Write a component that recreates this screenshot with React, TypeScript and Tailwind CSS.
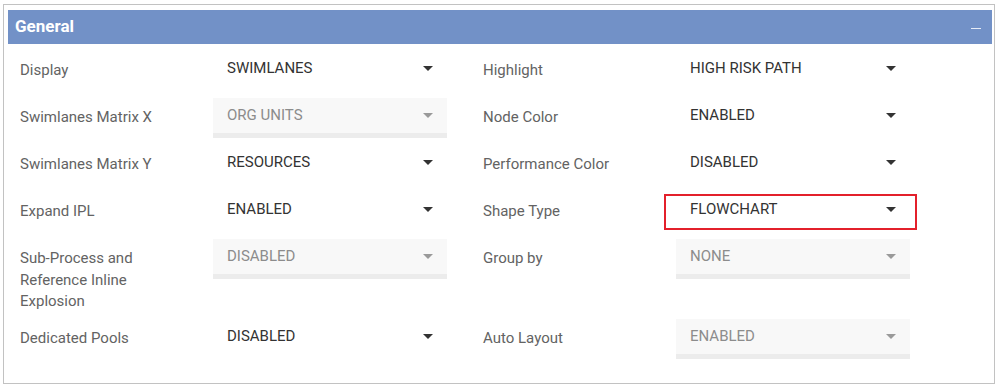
import React from "react";

type Field = { label: string; value: string; disabled?: boolean; marked?: boolean };

const rows: [Field, Field][] = [
  [
    { label: "Display", value: "SWIMLANES" },
    { label: "Highlight", value: "HIGH RISK PATH" },
  ],
  [
    { label: "Swimlanes Matrix X", value: "ORG UNITS", disabled: true },
    { label: "Node Color", value: "ENABLED" },
  ],
  [
    { label: "Swimlanes Matrix Y", value: "RESOURCES" },
    { label: "Performance Color", value: "DISABLED" },
  ],
  [
    { label: "Expand IPL", value: "ENABLED" },
    { label: "Shape Type", value: "FLOWCHART", marked: true },
  ],
  [
    { label: "Sub-Process and Reference Inline Explosion", value: "DISABLED", disabled: true },
    { label: "Group by", value: "NONE", disabled: true },
  ],
  [
    { label: "Dedicated Pools", value: "DISABLED" },
    { label: "Auto Layout", value: "ENABLED", disabled: true },
  ],
];

function Caret({ disabled }: { disabled?: boolean }) {
  return (
    <svg width="10" height="5" viewBox="0 0 10 5" className="shrink-0">
      <path d="M0 0h10L5 5z" fill={disabled ? "#9a9a9a" : "#333333"} />
    </svg>
  );
}

function Select({ value, disabled, marked }: Field) {
  return (
    <div className="relative w-[234px] shrink-0 pb-[7px]">
      <div className={`flex h-[40px] flex-col ${disabled ? "bg-[#f8f8f8]" : ""}`}>
        <div className="flex h-[35px] items-center justify-between pl-[14px] pr-[14px]">
          <span className={`text-[15px] ${disabled ? "text-[#8c8c8c]" : "text-[#333333]"}`}>
            {value}
          </span>
          <Caret disabled={disabled} />
        </div>
        <div className={`h-[5px] ${disabled ? "bg-[#ececec]" : ""}`} />
      </div>
      {marked && (
        <div className="pointer-events-none absolute left-[-12px] right-[-7px] top-[2px] h-[36px] border-2 border-[#e3202b]" />
      )}
    </div>
  );
}

function Cell({ field }: { field: Field }) {
  return (
    <div className="flex">
      <div className="w-[193px] shrink-0 pt-[9px] pb-[6px] pr-[40px] text-[15px] leading-[21.5px] text-[#636363]">
        {field.label}
      </div>
      <Select {...field} />
    </div>
  );
}

export default function App() {
  return (
    <div
      className="min-h-[389px] bg-white pl-[3px] pt-[4px]"
      style={{ fontFamily: "Roboto, 'Liberation Sans', sans-serif" }}
    >
      <div className="h-[380px] w-[992px] border border-[#c2c2c2] pl-[4px] pr-[2px] pt-[5px]">
        <div className="flex h-[34px] items-center justify-between bg-[#7291c7] pl-[7px] pr-[11px]">
          <span className="text-[17px] font-bold text-white">General</span>
          <div className="mt-[2px] h-px w-[10px] bg-[#e6ecf7]" />
        </div>
        <div className="flex flex-col pl-[12px] pt-[7px]">
          {rows.map(([a, b], i) => (
            <div key={i} className="flex gap-[36px]">
              <Cell field={a} />
              <Cell field={b} />
            </div>
          ))}
        </div>
      </div>
    </div>
  );
}
